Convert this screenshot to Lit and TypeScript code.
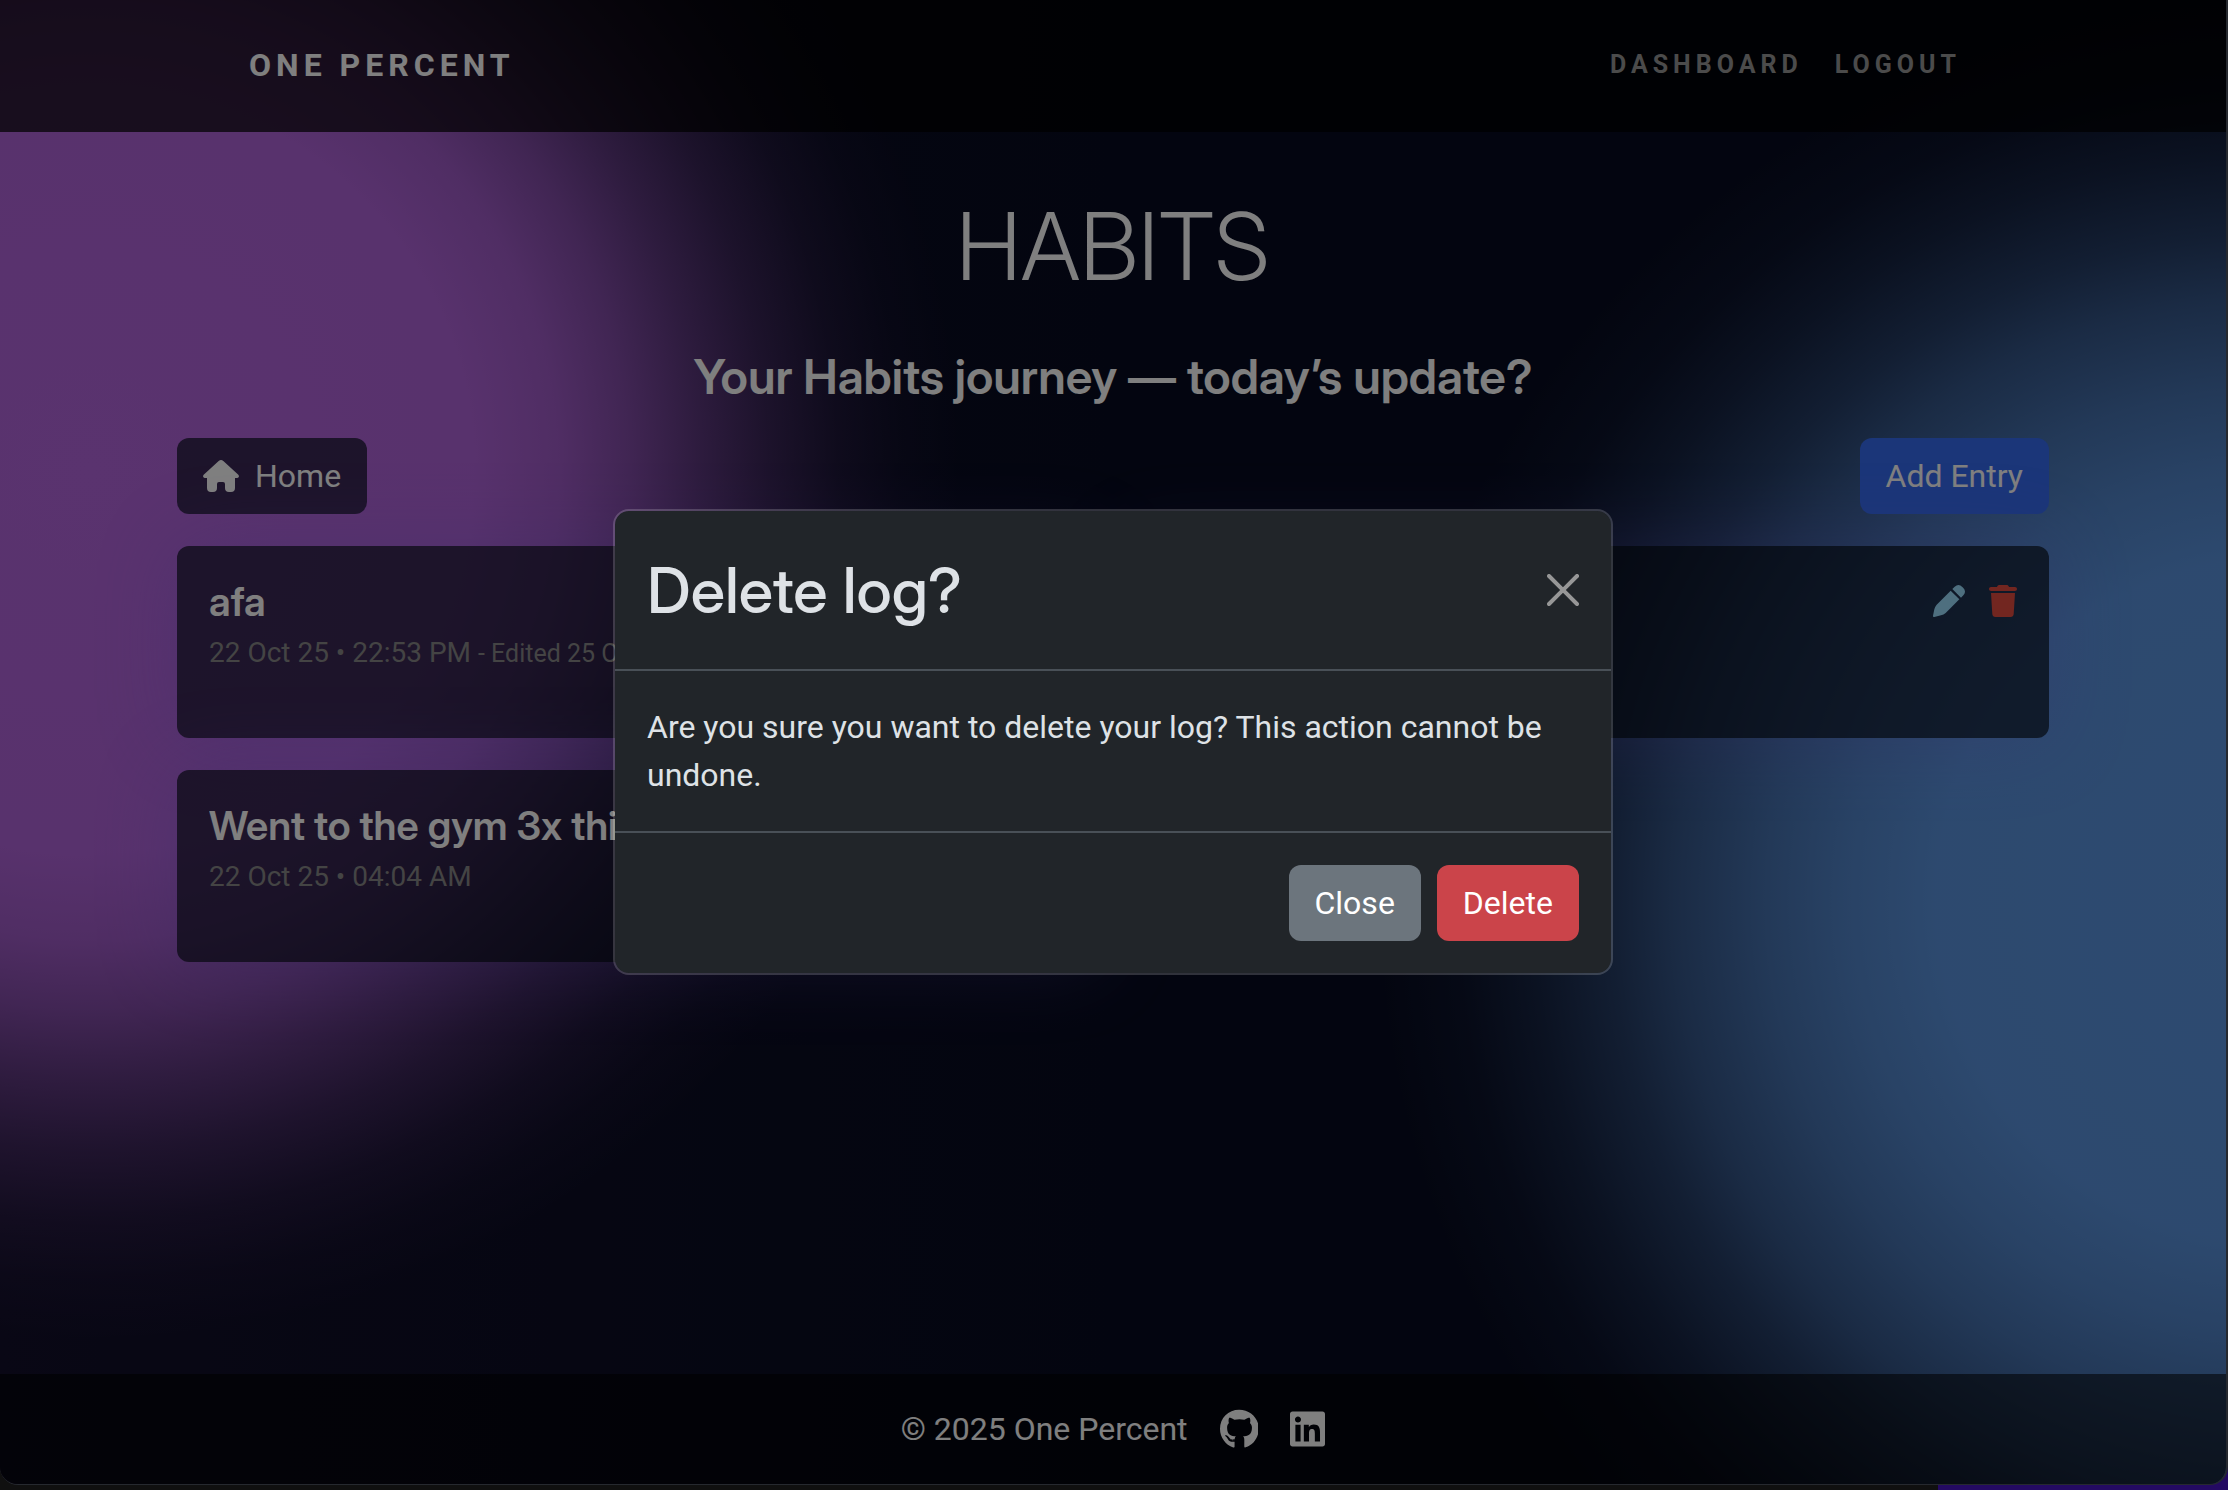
import { LitElement, html, css, svg } from "lit";
import { customElement, property, state } from "lit/decorators.js";

interface LogEntry {
  title: string;
  date: string;
  edited?: string;
}

const LOGS: LogEntry[] = [
  { title: "afa", date: "22 Oct 25 • 22:53 PM", edited: "25 Oct 25" },
  { title: "Gym", date: "22 Oct 25 • 22:50 PM" },
  { title: "Went to the gym 3x this week", date: "22 Oct 25 • 04:04 AM" },
];

const icons = {
  house: svg`<path d="M47 3Q54-3 61 3L106 44Q109 48 107 51Q106 54 102 54H96V84Q96 96 84 96H78Q66 96 66 84V72Q66 66 60 66H48Q42 66 42 72V84Q42 96 30 96H24Q12 96 12 84V54H6Q2 54 1 51Q-1 48 2 44Z"/>`,
  pen: svg`<path d="M53 17L79 43L38 84Q32 89 24 91L4 96Q0 97 0 92L4 73Q6 65 11 59ZM58 12L65 5Q77-5 88 6L91 9Q101 20 91 31L84 38Z"/>`,
  trash: svg`<path d="M135.2 17.7L128 32H32C14.3 32 0 46.3 0 64S14.3 96 32 96H416c17.7 0 32-14.3 32-32s-14.3-32-32-32H320l-7.2-14.3C307.4 6.8 296.3 0 284.2 0H163.8c-12.1 0-23.2 6.8-28.6 17.7zM416 128H32L53.2 467c1.6 25.3 22.6 45 47.9 45H346.9c25.3 0 46.3-19.7 47.9-45L416 128z"/>`,
  close: svg`<path d="M.293.293a1 1 0 0 1 1.414 0L8 6.586 14.293.293a1 1 0 1 1 1.414 1.414L9.414 8l6.293 6.293a1 1 0 0 1-1.414 1.414L8 9.414l-6.293 6.293a1 1 0 0 1-1.414-1.414L6.586 8 .293 1.707a1 1 0 0 1 0-1.414z"/>`,
  github: svg`<path d="M165.9 397.4c0 2-2.3 3.6-5.2 3.6-3.3.3-5.6-1.3-5.6-3.6 0-2 2.3-3.6 5.2-3.6 3-.3 5.6 1.3 5.6 3.6zm-31.1-4.5c-.7 2 1.3 4.3 4.3 4.9 2.6 1 5.6 0 6.2-2s-1.3-4.3-4.3-5.2c-2.6-.7-5.5.3-6.2 2.3zm44.2-1.7c-2.9.7-4.9 2.6-4.6 4.9.3 2 2.9 3.3 5.9 2.6 2.9-.7 4.9-2.6 4.6-4.6-.3-1.9-3-3.2-5.9-2.9zM244.8 8C106.1 8 0 113.3 0 252c0 110.9 69.8 205.8 169.5 239.2 12.8 2.3 17.3-5.6 17.3-12.1 0-6.2-.3-40.4-.3-61.4 0 0-70 15-84.7-29.8 0 0-11.4-29.1-27.8-36.6 0 0-22.9-15.7 1.6-15.4 0 0 24.9 2 38.6 25.8 21.9 38.6 58.6 27.5 72.9 20.9 2.3-16 8.8-27.1 16-33.7-55.9-6.2-112.3-14.3-112.3-110.5 0-27.5 7.6-41.3 23.6-58.9-2.6-6.5-11.1-33.3 2.6-67.9 20.9-6.5 69 27 69 27 20-5.6 41.5-8.5 62.8-8.5s42.8 2.9 62.8 8.5c0 0 48.1-33.6 69-27 13.7 34.7 5.2 61.4 2.6 67.9 16 17.7 25.8 31.5 25.8 58.9 0 96.5-58.9 104.2-114.8 110.5 9.2 7.9 17 22.9 17 46.4 0 33.7-.3 75.4-.3 83.6 0 6.5 4.6 14.4 17.3 12.1C428.2 457.8 496 362.9 496 252 496 113.3 383.5 8 244.8 8z"/>`,
  linkedin: svg`<path d="M416 32H31.9C14.3 32 0 46.5 0 64.3v383.4C0 465.5 14.3 480 31.9 480H416c17.6 0 32-14.5 32-32.3V64.3c0-17.8-14.4-32.3-32-32.3zM135.4 416H69V202.2h66.5V416zm-33.2-243c-21.3 0-38.5-17.3-38.5-38.5S80.9 96 102.2 96c21.2 0 38.5 17.3 38.5 38.5 0 21.3-17.2 38.5-38.5 38.5zm282.1 243h-66.4V312c0-24.8-.5-56.7-34.5-56.7-34.6 0-39.9 27-39.9 54.9V416h-66.4V202.2h63.7v29.2h.9c8.9-16.8 30.6-34.5 62.9-34.5 67.2 0 79.7 44.3 79.7 101.9V416z"/>`,
};

const shared = css`
  * { box-sizing: border-box; }
  h1, h2, h3, p { margin: 0; }
  h1, h2, h3 { font-variation-settings: "opsz" 32; }
  a { color: inherit; text-decoration: none; }
  svg { display: block; fill: currentColor; height: 32px; }
  button { font: inherit; color: inherit; cursor: pointer; }
  .icon-button { display: block; padding: 0; border: 0; background: none; }
`;

@customElement("log-card")
export class LogCard extends LitElement {
  @property({ attribute: false }) entry!: LogEntry;

  static styles = [
    shared,
    css`
      :host { display: block; min-width: 0; }
      .card {
        display: flex;
        align-items: flex-start;
        gap: 24px;
        min-height: 192px;
        height: 100%;
        padding: 32px;
        border-radius: 12px;
        background: rgba(9, 14, 28, 0.7);
      }
      .text { flex: 1; min-width: 0; }
      .title {
        font-family: "Inter Display", Inter, sans-serif;
        font-size: 40px;
        font-weight: 600;
        line-height: 48px;
        white-space: nowrap;
        overflow: hidden;
        text-overflow: ellipsis;
      }
      .date { margin-top: 8px; font-size: 28px; line-height: 38px; color: #888; }
      .edited { font-size: 25px; }
      .actions { display: flex; gap: 24px; padding-top: 7px; }
      .edit { color: #9cdeff; }
      .remove { color: #e44c40; }
    `,
  ];

  render() {
    const { title, date, edited } = this.entry;
    return html`
      <article class="card">
        <div class="text">
          <h3 class="title">${title}</h3>
          <p class="date">
            ${date}${edited ? html` <span class="edited">- Edited ${edited}</span>` : ""}
          </p>
        </div>
        <div class="actions">
          <button class="icon-button edit" aria-label="Edit log">
            <svg viewBox="0 0 96 96">${icons.pen}</svg>
          </button>
          <button class="icon-button remove" aria-label="Delete log">
            <svg viewBox="0 0 448 512">${icons.trash}</svg>
          </button>
        </div>
      </article>
    `;
  }
}

@customElement("confirm-dialog")
export class ConfirmDialog extends LitElement {
  static styles = [
    shared,
    css`
      :host {
        position: absolute;
        inset: 0;
        display: flex;
        align-items: center;
        justify-content: center;
        padding: 32px;
        background: rgba(0, 0, 0, 0.5);
      }
      .dialog {
        width: 100%;
        max-width: 1000px;
        border: 2px solid rgba(255, 255, 255, 0.18);
        border-radius: 16px;
        background: #212529;
        background-clip: padding-box;
        color: #dee2e6;
        font-size: 32px;
        line-height: 48px;
      }
      .header {
        display: flex;
        align-items: center;
        justify-content: space-between;
        padding: 32px;
        border-bottom: 2px solid #495057;
      }
      .title {
        font-family: "Inter Display", Inter, sans-serif;
        font-size: 63px;
        font-weight: 500;
        line-height: 94px;
      }
      .close { color: #979797; }
      .body { padding: 32px; }
      .footer {
        display: flex;
        justify-content: flex-end;
        gap: 16px;
        padding: 32px;
        border-top: 2px solid #495057;
      }
      .button {
        padding: 14px 26px;
        border: 0;
        border-radius: 12px;
        color: #fff;
      }
      .secondary { background: #6c757d; }
      .danger { background: #cb444a; }
    `,
  ];

  private dismiss() {
    this.dispatchEvent(new CustomEvent("dismiss"));
  }

  render() {
    return html`
      <section class="dialog" role="dialog" aria-modal="true" aria-labelledby="title">
        <header class="header">
          <h2 class="title" id="title">Delete log?</h2>
          <button class="icon-button close" aria-label="Close dialog" @click=${this.dismiss}>
            <svg viewBox="0 0 16 16">${icons.close}</svg>
          </button>
        </header>
        <p class="body">Are you sure you want to delete your log? This action cannot be undone.</p>
        <footer class="footer">
          <button class="button secondary" @click=${this.dismiss}>Close</button>
          <button class="button danger" @click=${this.dismiss}>Delete</button>
        </footer>
      </section>
    `;
  }
}

@customElement("app-root")
export class AppRoot extends LitElement {
  @state() private confirming = true;

  static styles = [
    shared,
    css`
      :host {
        display: block;
        min-height: 100vh;
        padding-bottom: 5px;
        box-sizing: border-box;
        font: 400 32px/48px Roboto, sans-serif;
        color: #fff;
        background: linear-gradient(90deg, #101010 87%, #240a62 87%);
      }
      .window {
        position: relative;
        display: flex;
        flex-direction: column;
        min-height: calc(100vh - 5px);
        overflow: hidden;
        border: solid #26292f;
        border-width: 0 2px 1px 0;
        border-radius: 0 0 18px 18px;
        background:
          radial-gradient(circle 870px at 90px 470px,
            rgba(180, 102, 222, 1) 0%, rgba(180, 102, 222, 0.98) 44%,
            rgba(180, 102, 222, 0.88) 54%, rgba(180, 102, 222, 0.7) 62%,
            rgba(180, 102, 222, 0.48) 70%, rgba(180, 102, 222, 0.28) 78%,
            rgba(180, 102, 222, 0.12) 86%, rgba(180, 102, 222, 0.04) 93%,
            rgba(180, 102, 222, 0) 100%),
          radial-gradient(circle 900px at calc(100% + 52px) 900px,
            rgba(92, 150, 226, 1) 0%, rgba(92, 150, 226, 0.98) 38%,
            rgba(92, 150, 226, 0.88) 48%, rgba(92, 150, 226, 0.74) 57%,
            rgba(92, 150, 226, 0.54) 67%, rgba(92, 150, 226, 0.36) 74%,
            rgba(92, 150, 226, 0.18) 83%, rgba(92, 150, 226, 0.06) 91%,
            rgba(92, 150, 226, 0) 100%),
          linear-gradient(90deg, #120f2a, #070b20 50%);
      }
      .nav { background: rgba(0, 0, 0, 0.72); }
      .nav-inner {
        display: flex;
        align-items: center;
        justify-content: space-between;
        width: calc(100% - 64px);
        max-width: 1728px;
        margin: 0 auto;
        padding: 41px 0 43px;
      }
      .brand { font-weight: 700; letter-spacing: 5px; }
      .links {
        display: flex;
        gap: 32px;
        padding-right: 16px;
        font-size: 25px;
        font-weight: 700;
        letter-spacing: 5px;
        color: #969696;
      }
      .main {
        flex: 1;
        display: flex;
        flex-direction: column;
        width: calc(100% - 64px);
        max-width: 1872px;
        margin: 0 auto;
        padding: 56px 0 32px;
      }
      .heading, .prompt {
        font-family: "Inter Display", Inter, sans-serif;
        text-align: center;
      }
      .heading { font-size: 93px; font-weight: 300; line-height: 116px; }
      .prompt {
        margin: 44px 0 32px;
        font-size: 48px;
        font-weight: 600;
        line-height: 58px;
      }
      .toolbar { display: flex; justify-content: space-between; margin-bottom: 32px; }
      .button {
        display: flex;
        align-items: center;
        gap: 16px;
        padding: 14px 26px;
        border: 0;
        border-radius: 12px;
      }
      .home { background: rgba(9, 14, 28, 0.7); }
      .add { background: #366cf2; }
      .logs {
        display: grid;
        grid-template-columns: repeat(2, minmax(0, 1fr));
        gap: 32px;
      }
      .log { border-radius: 12px; box-shadow: 0 0 80px rgba(110, 90, 220, 0.28); }
      .footer {
        display: flex;
        align-items: center;
        justify-content: center;
        gap: 32px;
        padding: 31px 0;
        background: rgba(0, 0, 0, 0.57);
      }
      .footer svg { height: 40px; }
    `,
  ];

  render() {
    return html`
      <div class="window">
        <header class="nav">
          <div class="nav-inner">
            <a class="brand" href="#home">ONE PERCENT</a>
            <nav class="links">
              <a href="#dashboard">DASHBOARD</a>
              <a href="#logout">LOGOUT</a>
            </nav>
          </div>
        </header>
        <main class="main">
          <h1 class="heading">HABITS</h1>
          <h2 class="prompt">Your Habits journey — today’s update?</h2>
          <div class="toolbar">
            <a class="button home" href="#home">
              <svg viewBox="0 0 108 96">${icons.house}</svg>Home
            </a>
            <button class="button add">Add Entry</button>
          </div>
          <div class="logs">
            ${LOGS.map((entry) => html`<log-card class="log" .entry=${entry}></log-card>`)}
          </div>
        </main>
        <footer class="footer">
          <span>© 2025 One Percent</span>
          <a href="#github" aria-label="GitHub"><svg viewBox="0 0 496 512">${icons.github}</svg></a>
          <a href="#linkedin" aria-label="LinkedIn"><svg viewBox="0 0 448 512">${icons.linkedin}</svg></a>
        </footer>
        ${this.confirming
          ? html`<confirm-dialog @dismiss=${() => (this.confirming = false)}></confirm-dialog>`
          : ""}
      </div>
    `;
  }
}
